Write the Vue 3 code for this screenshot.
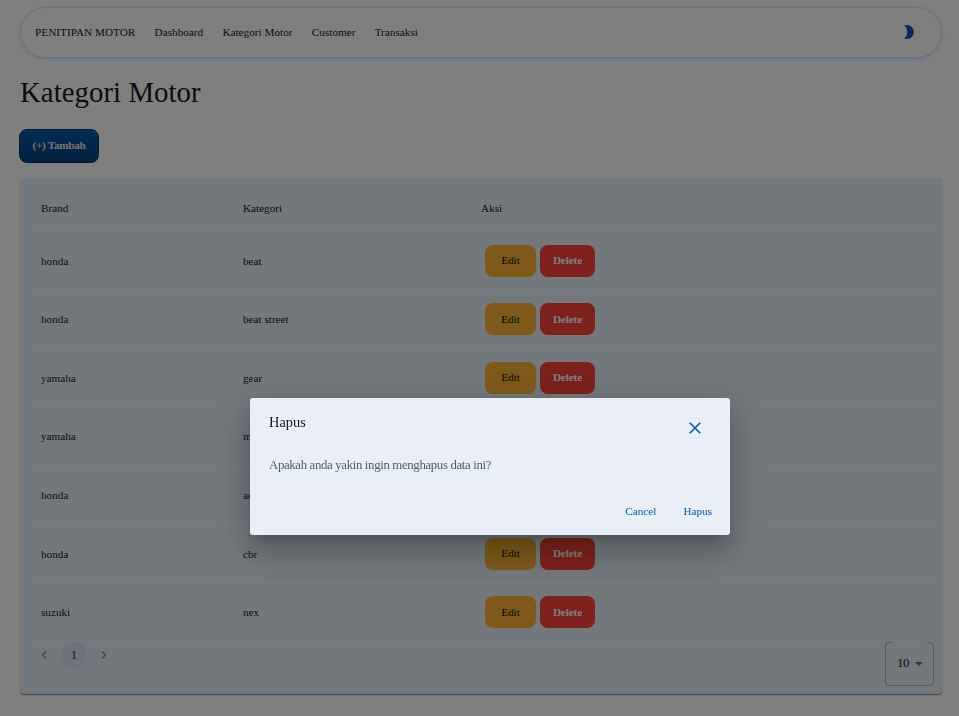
<script setup>
const links = ['Dashboard', 'Kategori Motor', 'Customer', 'Transaksi']
const rows = [
  { brand: 'honda', kategori: 'beat' },
  { brand: 'honda', kategori: 'beat street' },
  { brand: 'yamaha', kategori: 'gear' },
  { brand: 'yamaha', kategori: 'mio' },
  { brand: 'honda', kategori: 'aerox' },
  { brand: 'honda', kategori: 'cbr' },
  { brand: 'suzuki', kategori: 'nex' },
]
</script>

<template>
  <div class="page">
    <header class="nav">
      <span class="logo">PENITIPAN MOTOR</span>
      <nav class="links">
        <a v-for="l in links" :key="l">{{ l }}</a>
      </nav>
      <svg class="moon" viewBox="0 0 10 14"><path d="M0 .6C1 .2 2 0 3 0c3.800 0 6.800 3.100 6.800 7s-3 7-6.800 7c-1 0-2-.2-3-.6C2.200 12 3.300 9.700 3.300 7S2.200 2 0 .6z" /></svg>
    </header>

    <h1>Kategori Motor</h1>
    <button class="add">(+) Tambah</button>

    <section class="card">
      <div class="row head">
        <span>Brand</span><span>Kategori</span><span>Aksi</span>
      </div>
      <div v-for="(r, i) in rows" :key="i" class="row">
        <span>{{ r.brand }}</span>
        <span>{{ r.kategori }}</span>
        <div class="actions">
          <button class="edit">Edit</button>
          <button class="delete">Delete</button>
        </div>
      </div>
      <footer class="foot">
        <div class="pager">
          <svg class="arrow" viewBox="0 0 6 8"><path d="M5 .5 1.500 4 5 7.500" /></svg>
          <span class="current">1</span>
          <svg class="arrow" viewBox="0 0 6 8"><path d="M1 .5 4.500 4 1 7.500" /></svg>
        </div>
        <fieldset class="size">
          <legend></legend>
          <div class="value">10 <i class="caret"></i></div>
        </fieldset>
      </footer>
    </section>

    <div class="overlay">
      <div class="dialog">
        <div class="dialog-top">
          <h2>Hapus</h2>
          <svg class="close" viewBox="0 0 12 12"><path d="M.8.8 11.200 11.200M11.200.8.8 11.200" /></svg>
        </div>
        <p>Apakah anda yakin ingin menghapus data ini?</p>
        <div class="dialog-actions">
          <button>Cancel</button>
          <button>Hapus</button>
        </div>
      </div>
    </div>
  </div>
</template>

<style>
body {
  margin: 0;
  overflow: hidden;
}
</style>

<style scoped>
* {
  box-sizing: border-box;
}
.page {
  height: 716px;
  padding: 7px 17px 0 20px;
  background: #fff;
  color: #14181c;
  font: 11.2px/16px "Liberation Serif", "Times New Roman", serif;
  overflow: hidden;
}
button {
  border: 0;
  padding: 0;
  background: none;
  font: inherit;
}
.nav {
  display: flex;
  align-items: center;
  height: 51px;
  padding: 0 27px 1px 14px;
  border: 1px solid #d6deea;
  border-radius: 26px;
  box-shadow: 0 1px 4px rgba(110, 160, 230, 0.35);
}
.logo {
  letter-spacing: 0.04px;
}
.links {
  display: flex;
  flex: 1;
  gap: 19.2px;
  margin-left: 19.2px;
  letter-spacing: 0.02px;
}
.moon {
  width: 10px;
  height: 14px;
  fill: #0959aa;
}
h1 {
  margin: 17px 0 0;
  font-size: 28.8px;
  line-height: 34px;
  font-weight: 400;
  letter-spacing: 0.05px;
}
.add {
  display: block;
  width: 80px;
  height: 34px;
  margin: 20px 0 0 -1px;
  padding-bottom: 2px;
  border: 1px solid #033363;
  border-radius: 8px;
  background: linear-gradient(#0959aa, #064079);
  box-shadow: inset 0 1px 1px #1468bd;
  color: #e8e8e8;
  font-weight: 700;
  letter-spacing: -0.3px;
}
.card {
  height: 516px;
  margin-top: 15px;
  padding: 0 8px;
  border-radius: 4px;
  background: #e8f0f5;
  box-shadow: 0 1px 1px #888, 0 1px 2px rgba(0, 0, 0, 0.08);
}
.row {
  display: grid;
  grid-template-columns: 202px 238px 1fr;
  align-items: center;
  height: 58.57px;
  padding: 0 0 0 13px;
  border-bottom: 1px solid #f4f6f8;
}
.head {
  height: 54px;
  padding-top: 7px;
}
.actions {
  display: flex;
  gap: 4px;
  padding-left: 4px;
}
.edit,
.delete {
  width: 51px;
  height: 32px;
  padding-bottom: 1px;
  border-radius: 8px;
  background: #fab236;
  color: #161006;
}
.delete {
  width: 55px;
  background: #f94237;
  color: #fff;
  font-weight: 700;
  letter-spacing: -0.1px;
}
.foot {
  display: flex;
  justify-content: space-between;
  padding-left: 13px;
}
.pager {
  display: flex;
  align-items: center;
  height: 26px;
  gap: 14px;
}
.arrow {
  width: 6px;
  height: 8px;
  fill: none;
  stroke: #7c848c;
  stroke-width: 1.3;
}
.current {
  width: 26px;
  border-radius: 50%;
  background: #dae4f6;
  font-size: 12px;
  line-height: 26px;
  text-align: center;
}
.size {
  width: 49px;
  height: 44px;
  margin: 0;
  padding: 0;
  border: 1px solid #aab1b8;
  border-radius: 4px;
}
.size legend {
  width: 34px;
  height: 1px;
  margin-left: 7px;
  padding: 0;
}
.value {
  display: flex;
  align-items: center;
  gap: 6px;
  height: 41px;
  padding-left: 11px;
  font-size: 12.8px;
  letter-spacing: -0.5px;
}
.caret {
  margin-top: 1px;
  border: 4px solid transparent;
  border-top-color: #636b73;
  border-bottom: 0;
}
.overlay {
  position: fixed;
  inset: 0;
  display: flex;
  align-items: flex-start;
  padding: 398px 0 0 250px;
  background: rgba(0, 0, 0, 0.5);
}
.dialog {
  width: 480px;
  height: 137px;
  border-radius: 3px;
  padding: 16px 18px 0 19px;
  background: #eaeff7;
  box-shadow: 0 9px 12px -6px rgba(0, 0, 0, 0.2), 0 19px 30px 2px rgba(0, 0, 0, 0.14), 0 7px 37px 6px rgba(0, 0, 0, 0.12);
}
.dialog-top {
  display: flex;
  justify-content: space-between;
  height: 42px;
}
h2 {
  margin: 0;
  font-size: 14.4px;
  line-height: 17px;
  font-weight: 400;
}
.close {
  width: 12px;
  height: 12px;
  margin: 8px 11px 0 0;
  fill: none;
  stroke: #0959aa;
  stroke-width: 1.6;
}
p {
  margin: 0;
  color: #4f5d6c;
  font-size: 12.8px;
  line-height: 18px;
  letter-spacing: -0.34px;
}
.dialog-actions {
  display: flex;
  justify-content: flex-end;
  gap: 27px;
  margin-top: 29px;
}
.dialog-actions button {
  color: #0959aa;
}
</style>
